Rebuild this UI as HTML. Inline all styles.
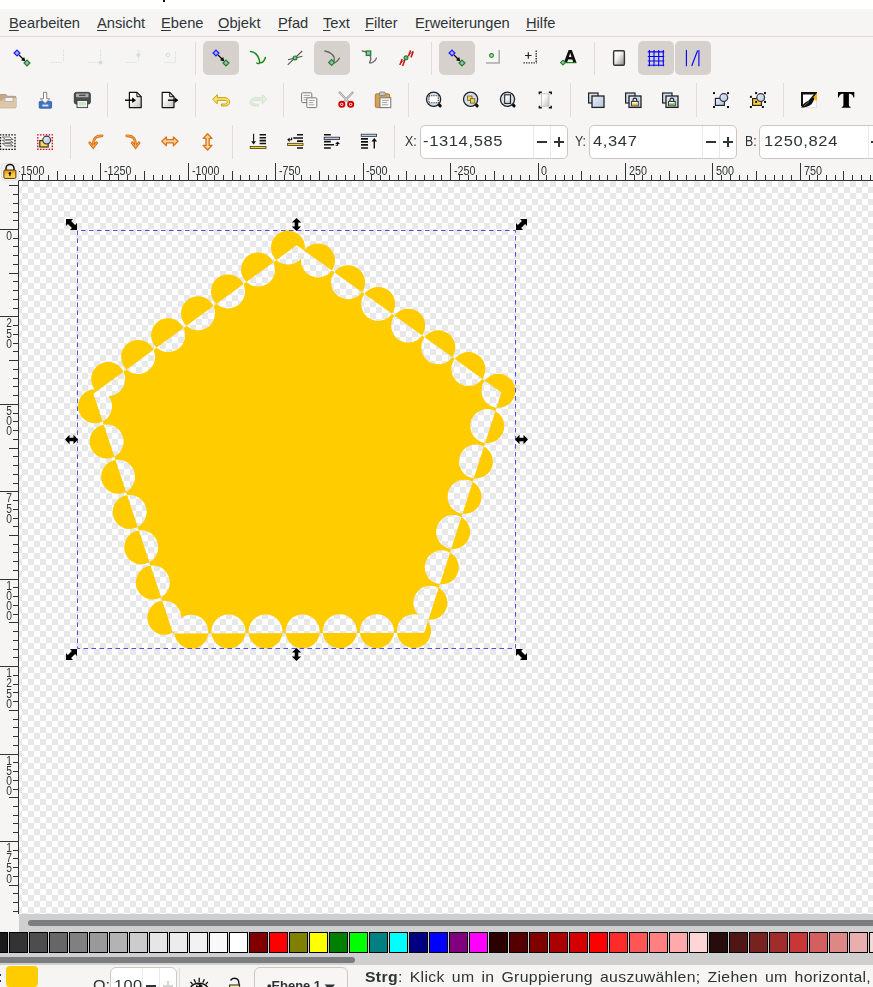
<!DOCTYPE html><html><head><meta charset="utf-8"><title>Inkscape</title><style>
*{box-sizing:border-box;margin:0;padding:0}
html,body{width:873px;height:987px;overflow:hidden;background:#f6f5f4;font-family:"Liberation Sans",sans-serif;color:#2e3436}
.abs{position:absolute}
#top{position:absolute;left:0;top:0;width:873px;height:9px;background:#fff}
#menuline{position:absolute;left:0;top:36px;width:873px;height:1px;background:#dedbd8}
.mi{position:absolute;top:15.4px;font-size:14.7px;line-height:17px;white-space:nowrap;color:#2e3436}
.mi u{text-decoration:underline;text-underline-offset:1.6px;text-decoration-thickness:1px}
.sep{position:absolute;width:1px;background:#dfdcd9}
.pressed{position:absolute;width:36px;height:34px;border-radius:5px;background:#d6d1cd}
.inp{position:absolute;height:34px;background:#fff;border:1px solid #cdc7c2;border-radius:5px}
.div{position:absolute;width:1px;background:#ebe9e7}
.lbl{position:absolute;font-size:14.7px;line-height:17px;color:#2e3436;white-space:nowrap;transform-origin:0 50%;transform:scaleX(.84)}
.num{position:absolute;font-size:14.5px;line-height:17px;color:#2e3436;white-space:nowrap;transform-origin:0 50%;transform:scaleX(1.14);letter-spacing:.55px}
#canvas{position:absolute;left:19px;top:181px;width:854px;height:733px;background-color:#fff;
 background-image:conic-gradient(#e8e8e8 25%,#fff 0 50%,#e8e8e8 0 75%,#fff 0);background-size:12px 12px;background-position:-3px 0px}
#hscroll{position:absolute;left:19px;top:914px;width:854px;height:18px;background:#cfcfcf}
#hthumb{position:absolute;left:28px;top:920px;width:860px;height:6px;border-radius:3px;background:#7b7e7e}
#palette{position:absolute;left:0;top:932px;width:873px;height:33px;background:#cfcfcf}
.sw{position:absolute;top:932px;width:19px;height:21px;border:1px solid #000}
#pthumb{position:absolute;left:-10px;top:957px;width:365px;height:6px;border-radius:3px;background:#7b7e7e}
#status{position:absolute;left:0;top:965px;width:873px;height:22px;background:#f6f5f4}
.rl{position:absolute;font-size:12.5px;line-height:12px;color:#2e3436;transform-origin:0 0;transform:scaleX(.86);white-space:nowrap}
.vl{position:absolute;font-size:12.5px;line-height:10.2px;color:#2e3436;width:10px;text-align:center;transform-origin:50% 0;transform:scaleX(.82)}
.st{position:absolute;font-size:14.6px;line-height:17px;color:#2e3436;white-space:nowrap;transform-origin:0 50%}
</style></head><body>
<div id="top"></div><div class="abs" style="left:162.5px;top:0;width:2.5px;height:2px;background:#111"></div>
<div id="menuline"></div>
<div class="mi" style="left:9px"><u>B</u>earbeiten</div>
<div class="mi" style="left:97px"><u>A</u>nsicht</div>
<div class="mi" style="left:161px"><u>E</u>bene</div>
<div class="mi" style="left:218px"><u>O</u>bjekt</div>
<div class="mi" style="left:278px"><u>P</u>fad</div>
<div class="mi" style="left:323px"><u>T</u>ext</div>
<div class="mi" style="left:365px"><u>F</u>ilter</div>
<div class="mi" style="left:415px">E<u>r</u>weiterungen</div>
<div class="mi" style="left:526px"><u>H</u>ilfe</div>
<div class="pressed" style="left:203px;top:41px"></div>
<div class="pressed" style="left:314px;top:41px"></div>
<div class="pressed" style="left:439px;top:41px"></div>
<div class="pressed" style="left:638px;top:41px"></div>
<div class="pressed" style="left:675px;top:41px"></div>
<div class="sep" style="left:195px;top:42px;height:33px"></div>
<div class="sep" style="left:431px;top:42px;height:33px"></div>
<div class="sep" style="left:594px;top:42px;height:33px"></div>
<div class="sep" style="left:107px;top:83px;height:34px"></div>
<div class="sep" style="left:195px;top:83px;height:34px"></div>
<div class="sep" style="left:283px;top:83px;height:34px"></div>
<div class="sep" style="left:408px;top:83px;height:34px"></div>
<div class="sep" style="left:570px;top:83px;height:34px"></div>
<div class="sep" style="left:696px;top:83px;height:34px"></div>
<div class="sep" style="left:783px;top:83px;height:34px"></div>
<div class="sep" style="left:70px;top:125px;height:34px"></div>
<div class="sep" style="left:232px;top:125px;height:34px"></div>
<div class="sep" style="left:394px;top:125px;height:34px"></div>
<div class="lbl" style="left:405px;top:133px">X:</div>
<div class="inp" style="left:420px;top:125px;width:148px"></div>
<div class="div" style="left:533px;top:126px;height:32px"></div><div class="div" style="left:550px;top:126px;height:32px"></div>
<div class="num" style="left:423px;top:133px">-1314,585</div>
<div class="abs" style="left:536.5px;top:141px;width:10px;height:2px;background:#2e3436"></div>
<div class="abs" style="left:553.5px;top:141px;width:10px;height:2px;background:#2e3436"></div><div class="abs" style="left:557.5px;top:137px;width:2px;height:10px;background:#2e3436"></div>
<div class="lbl" style="left:575px;top:133px">Y:</div>
<div class="inp" style="left:589px;top:125px;width:148px"></div>
<div class="div" style="left:702px;top:126px;height:32px"></div><div class="div" style="left:719px;top:126px;height:32px"></div>
<div class="num" style="left:592.6px;top:133px">4,347</div>
<div class="abs" style="left:705.5px;top:141px;width:10px;height:2px;background:#2e3436"></div>
<div class="abs" style="left:722.5px;top:141px;width:10px;height:2px;background:#2e3436"></div><div class="abs" style="left:726.5px;top:137px;width:2px;height:10px;background:#2e3436"></div>
<div class="lbl" style="left:745px;top:133px">B:</div>
<div class="inp" style="left:759px;top:125px;width:148px"></div>
<div class="div" style="left:867.5px;top:126px;height:32px"></div><div class="div" style="left:884.5px;top:126px;height:32px"></div>
<div class="num" style="left:764px;top:133px">1250,824</div>
<div class="abs" style="left:871.0px;top:141px;width:10px;height:2px;background:#2e3436"></div>
<div class="abs" style="left:888.0px;top:141px;width:10px;height:2px;background:#2e3436"></div><div class="abs" style="left:892.0px;top:137px;width:2px;height:10px;background:#2e3436"></div>
<div id="canvas"></div>
<svg class="abs" style="left:0;top:0" width="873" height="987" viewBox="0 0 873 987">
<defs><g id="cs"><circle cx="498.45" cy="390.84" r="17.0"/><circle cx="468.38" cy="369.10" r="17.0"/><circle cx="438.31" cy="347.36" r="17.0"/><circle cx="408.23" cy="325.63" r="17.0"/><circle cx="378.16" cy="303.89" r="17.0"/><circle cx="348.09" cy="282.15" r="17.0"/><circle cx="318.02" cy="260.41" r="17.0"/><circle cx="287.97" cy="247.62" r="17.0"/><circle cx="258.00" cy="269.50" r="17.0"/><circle cx="228.03" cy="291.38" r="17.0"/><circle cx="198.07" cy="313.27" r="17.0"/><circle cx="168.10" cy="335.15" r="17.0"/><circle cx="138.13" cy="357.03" r="17.0"/><circle cx="108.16" cy="378.92" r="17.0"/><circle cx="95.02" cy="406.22" r="17.0"/><circle cx="106.57" cy="441.48" r="17.0"/><circle cx="118.12" cy="476.74" r="17.0"/><circle cx="129.67" cy="512.01" r="17.0"/><circle cx="141.22" cy="547.27" r="17.0"/><circle cx="152.77" cy="582.53" r="17.0"/><circle cx="164.32" cy="617.80" r="17.0"/><circle cx="191.34" cy="631.67" r="17.0"/><circle cx="228.45" cy="631.58" r="17.0"/><circle cx="265.55" cy="631.49" r="17.0"/><circle cx="302.66" cy="631.40" r="17.0"/><circle cx="339.76" cy="631.31" r="17.0"/><circle cx="376.87" cy="631.22" r="17.0"/><circle cx="413.98" cy="631.13" r="17.0"/><circle cx="430.37" cy="602.68" r="17.0"/><circle cx="441.75" cy="567.36" r="17.0"/><circle cx="453.14" cy="532.04" r="17.0"/><circle cx="464.52" cy="496.73" r="17.0"/><circle cx="475.90" cy="461.41" r="17.0"/><circle cx="487.28" cy="426.09" r="17.0"/></g><path id="pg" d="M296.70,245.21 L501.35,392.43 L424.24,632.78 L173.07,633.59 L93.45,393.64Z"/>
<mask id="m1" maskUnits="userSpaceOnUse" x="60" y="210" width="480" height="460"><use href="#pg" fill="#fff"/><use href="#cs" fill="#000"/></mask>
<mask id="m2" maskUnits="userSpaceOnUse" x="60" y="210" width="480" height="460"><use href="#cs" fill="#fff"/><use href="#pg" fill="#000"/></mask></defs>
<rect x="60" y="210" width="480" height="460" fill="#ffcc00" mask="url(#m1)"/>
<rect x="60" y="210" width="480" height="460" fill="#ffcc00" mask="url(#m2)"/>
<rect x="77.5" y="230.5" width="438" height="418" fill="none" stroke="#5050e8" stroke-width="1" stroke-dasharray="4.5 3.5" stroke-dashoffset="4.5"/>
<path d="M0,0 L7,0 L5.1,1.9 L9.1,5.9 L11,4 L11,11 L4,11 L5.9,9.1 L1.9,5.1 L0,7 Z" transform="translate(66,219)" fill="#000"/><path d="M0,0 L7,0 L5.1,1.9 L9.1,5.9 L11,4 L11,11 L4,11 L5.9,9.1 L1.9,5.1 L0,7 Z" transform="translate(527,219) scale(-1,1)" fill="#000"/><path d="M0,0 L7,0 L5.1,1.9 L9.1,5.9 L11,4 L11,11 L4,11 L5.9,9.1 L1.9,5.1 L0,7 Z" transform="translate(77,649) scale(-1,1)" fill="#000"/><path d="M0,0 L7,0 L5.1,1.9 L9.1,5.9 L11,4 L11,11 L4,11 L5.9,9.1 L1.9,5.1 L0,7 Z" transform="translate(516,649)" fill="#000"/><path d="M0,-6.5 L4.7,-2 L1.8,-2 L1.8,2 L4.7,2 L0,6.5 L-4.7,2 L-1.8,2 L-1.8,-2 L-4.7,-2 Z" transform="translate(296.5,224.5)" fill="#000"/><path d="M0,-6.5 L4.7,-2 L1.8,-2 L1.8,2 L4.7,2 L0,6.5 L-4.7,2 L-1.8,2 L-1.8,-2 L-4.7,-2 Z" transform="translate(296.5,654.5)" fill="#000"/><path d="M-6.5,0 L-2,-4.7 L-2,-1.8 L2,-1.8 L2,-4.7 L6.5,0 L2,4.7 L2,1.8 L-2,1.8 L-2,4.7 Z" transform="translate(71.5,439.5)" fill="#000"/><path d="M-6.5,0 L-2,-4.7 L-2,-1.8 L2,-1.8 L2,-4.7 L6.5,0 L2,4.7 L2,1.8 L-2,1.8 L-2,4.7 Z" transform="translate(521.5,439.5)" fill="#000"/>
<rect x="0" y="162" width="873" height="19" fill="#f6f5f4"/><rect x="0" y="181" width="19" height="733" fill="#f6f5f4"/><path d="M22.5,175V180 M30.5,175V180 M39.5,175V180 M48.5,175V180 M57.5,171V180 M65.5,175V180 M74.5,175V180 M83.5,175V180 M92.5,175V180 M100.5,163V180 M109.5,175V180 M118.5,175V180 M127.5,175V180 M135.5,175V180 M144.5,171V180 M153.5,175V180 M162.5,175V180 M170.5,175V180 M179.5,175V180 M188.5,163V180 M197.5,175V180 M205.5,175V180 M214.5,175V180 M223.5,175V180 M232.5,171V180 M240.5,175V180 M249.5,175V180 M258.5,175V180 M266.5,175V180 M275.5,163V180 M284.5,175V180 M293.5,175V180 M301.5,175V180 M310.5,175V180 M319.5,171V180 M328.5,175V180 M336.5,175V180 M345.5,175V180 M354.5,175V180 M363.5,163V180 M371.5,175V180 M380.5,175V180 M389.5,175V180 M398.5,175V180 M406.5,171V180 M415.5,175V180 M424.5,175V180 M433.5,175V180 M441.5,175V180 M450.5,163V180 M459.5,175V180 M468.5,175V180 M476.5,175V180 M485.5,175V180 M494.5,171V180 M503.5,175V180 M511.5,175V180 M520.5,175V180 M529.5,175V180 M538.5,163V180 M546.5,175V180 M555.5,175V180 M564.5,175V180 M572.5,175V180 M581.5,171V180 M590.5,175V180 M599.5,175V180 M607.5,175V180 M616.5,175V180 M625.5,163V180 M634.5,175V180 M642.5,175V180 M651.5,175V180 M660.5,175V180 M669.5,171V180 M677.5,175V180 M686.5,175V180 M695.5,175V180 M704.5,175V180 M712.5,163V180 M721.5,175V180 M730.5,175V180 M739.5,175V180 M747.5,175V180 M756.5,171V180 M765.5,175V180 M774.5,175V180 M782.5,175V180 M791.5,175V180 M800.5,163V180 M809.5,175V180 M817.5,175V180 M826.5,175V180 M835.5,175V180 M843.5,171V180 M852.5,175V180 M861.5,175V180 M870.5,175V180 M878.5,175V180 M9,185.5H18 M13,194.5H18 M13,203.5H18 M13,212.5H18 M13,220.5H18 M0,229.5H18 M13,238.5H18 M13,246.5H18 M13,255.5H18 M13,264.5H18 M9,273.5H18 M13,281.5H18 M13,290.5H18 M13,299.5H18 M13,308.5H18 M0,316.5H18 M13,325.5H18 M13,334.5H18 M13,343.5H18 M13,351.5H18 M9,360.5H18 M13,369.5H18 M13,378.5H18 M13,386.5H18 M13,395.5H18 M0,404.5H18 M13,413.5H18 M13,421.5H18 M13,430.5H18 M13,439.5H18 M9,448.5H18 M13,456.5H18 M13,465.5H18 M13,474.5H18 M13,483.5H18 M0,491.5H18 M13,500.5H18 M13,509.5H18 M13,518.5H18 M13,526.5H18 M9,535.5H18 M13,544.5H18 M13,552.5H18 M13,561.5H18 M13,570.5H18 M0,579.5H18 M13,587.5H18 M13,596.5H18 M13,605.5H18 M13,614.5H18 M9,622.5H18 M13,631.5H18 M13,640.5H18 M13,649.5H18 M13,657.5H18 M0,666.5H18 M13,675.5H18 M13,684.5H18 M13,692.5H18 M13,701.5H18 M9,710.5H18 M13,719.5H18 M13,727.5H18 M13,736.5H18 M13,745.5H18 M0,754.5H18 M13,762.5H18 M13,771.5H18 M13,780.5H18 M13,789.5H18 M9,797.5H18 M13,806.5H18 M13,815.5H18 M13,823.5H18 M13,832.5H18 M0,841.5H18 M13,850.5H18 M13,858.5H18 M13,867.5H18 M13,876.5H18 M9,885.5H18 M13,893.5H18 M13,902.5H18 M13,911.5H18 M19,180.5H873 M18.5,180V914 " stroke="#2e3436" stroke-width="1" fill="none"/>
</svg>
<div class="rl" style="left:16.6px;top:165px">-1500</div><div class="rl" style="left:104.1px;top:165px">-1250</div><div class="rl" style="left:191.5px;top:165px">-1000</div><div class="rl" style="left:278.9px;top:165px">-750</div><div class="rl" style="left:366.3px;top:165px">-500</div><div class="rl" style="left:453.8px;top:165px">-250</div><div class="rl" style="left:541.2px;top:165px">0</div><div class="rl" style="left:628.6px;top:165px">250</div><div class="rl" style="left:716.1px;top:165px">500</div><div class="rl" style="left:803.5px;top:165px">750</div><div class="vl" style="left:3.6px;top:231.0px">0</div><div class="vl" style="left:3.6px;top:318.4px">2<br>5<br>0</div><div class="vl" style="left:3.6px;top:405.9px">5<br>0<br>0</div><div class="vl" style="left:3.6px;top:493.3px">7<br>5<br>0</div><div class="vl" style="left:3.6px;top:580.7px">1<br>0<br>0<br>0</div><div class="vl" style="left:3.6px;top:668.1px">1<br>2<br>5<br>0</div><div class="vl" style="left:3.6px;top:755.6px">1<br>5<br>0<br>0</div><div class="vl" style="left:3.6px;top:843.0px">1<br>7<br>5<br>0</div><svg class="abs" style="left:0;top:160px" width="20" height="21" viewBox="0 0 20 21"><defs><linearGradient id="lk" x1="0" y1="0" x2="0" y2="1"><stop offset="0" stop-color="#e08a18"/><stop offset=".45" stop-color="#f8c030"/><stop offset="1" stop-color="#ffe268"/></linearGradient></defs><rect x="0" y="0" width="19" height="20.5" fill="#f6f5f4"/><rect x="1.5" y="3.5" width="17" height="17" rx="3.5" fill="#f4f2f0" stroke="#e6e3e0" stroke-width="1"/><path d="M6,10.5V8.4a4,4 0 0 1 8,0V10.5" fill="none" stroke="#111" stroke-width="1.5"/><rect x="3.9" y="10" width="12" height="8.4" rx="1.2" fill="url(#lk)" stroke="#4a3a10" stroke-width="1"/><circle cx="9.9" cy="13.2" r="1.2" fill="#111"/><rect x="9.3" y="13.4" width="1.2" height="2.8" fill="#111"/></svg>
<svg class="abs" style="left:0;top:0" width="873" height="162" viewBox="0 0 873 162" fill="none"><defs><linearGradient id="gp" x1="0" y1="0" x2="1" y2="1"><stop offset="0" stop-color="#fff"/><stop offset=".35" stop-color="#fafafa"/><stop offset="1" stop-color="#c0c0c0"/></linearGradient><linearGradient id="gb" x1="0" y1="0" x2="1" y2="1"><stop offset="0" stop-color="#eaf0f8"/><stop offset="1" stop-color="#b4c6dc"/></linearGradient><linearGradient id="gg" x1="0" y1="0" x2="1" y2="1"><stop offset="0" stop-color="#fff"/><stop offset=".4" stop-color="#f4f4f4"/><stop offset="1" stop-color="#8a8a8a"/></linearGradient></defs><path d="M19,55L23.8,59.8" stroke="#111" stroke-width="1.3"/><path d="M25.4,61.4l-4.4,-1.2l3.2,-3.2z" fill="#111"/><path d="M17,50.1l2.9,2.9l-2.9,2.9l-2.9,-2.9z" fill="#b0b0ff" stroke="#2222ee" stroke-width="1.3"/><path d="M27,60.1l2.9,2.9l-2.9,2.9l-2.9,-2.9z" fill="#a8b0d8" stroke="#1e8a1e" stroke-width="1.3"/><path d="M51,62.5H63 M63.5,50V62" stroke="#cfe0cf" stroke-width="1.2" stroke-dasharray="1.2 1.2"/><path d="M88,62.5H100 M100.5,50V62" stroke="#cfe0cf" stroke-width="1.2" stroke-dasharray="1.2 1.2"/><circle cx="100.5" cy="62.5" r="2" fill="#d4e2d4"/><path d="M126,62.5H138 M138.5,50V62" stroke="#cfe0cf" stroke-width="1.2" stroke-dasharray="1.2 1.2"/><circle cx="138.5" cy="55" r="2" fill="#d4e2d4"/><path d="M164,62.5H175 M175.5,52V62" stroke="#cfe0cf" stroke-width="1.2" stroke-dasharray="1.2 1.2"/><circle cx="168" cy="55" r="1.8" stroke="#cfe0cf" stroke-width="1"/><path d="M218,55L222.8,59.8" stroke="#111" stroke-width="1.3"/><path d="M224.4,61.4l-4.4,-1.2l3.2,-3.2z" fill="#111"/><path d="M216,50.1l2.9,2.9l-2.9,2.9l-2.9,-2.9z" fill="#b0b0ff" stroke="#2222ee" stroke-width="1.3"/><path d="M226,60.1l2.9,2.9l-2.9,2.9l-2.9,-2.9z" fill="#a8b0d8" stroke="#1e8a1e" stroke-width="1.3"/><path d="M250.6,51.6C256.4,52.2 259,56.4 259.8,62.8C262.6,63 264.6,60.6 265.3,57.4M259.8,62.8C258.8,63.6 257.6,63.6 256.8,63" stroke="#1b8a1b" stroke-width="1.5" stroke-linecap="round" stroke-linejoin="round"/><path d="M287.7,64.8L302.2,51 M288,59.8L302.4,56.2" stroke="#555" stroke-width="1.1"/><circle cx="295" cy="57.9" r="1.9" fill="#8fa0c8" stroke="#1e8a1e" stroke-width="1.2"/><path d="M324.8,51C331,52 335.5,56 334,60.5C333,63.5 335.5,64 339.4,58.2" stroke="#666" stroke-width="1.3" stroke-linecap="round"/><path d="M331.6,59.6l2.9,2.9l-2.9,2.9l-2.9,-2.9z" fill="#a8b0d8" stroke="#1e8a1e" stroke-width="1.3"/><path d="M362.3,51C366,51.5 369,53 370.5,56.5C372,60 368.5,62.8 370,63C372.5,63 375,61 376.4,58.2" stroke="#666" stroke-width="1.3" stroke-linecap="round"/><rect x="366.3" y="51" width="4.4" height="4.4" fill="#a8b0d8" stroke="#1e8a1e" stroke-width="1.3"/><path d="M399.3,64.6L413,51.2" stroke="#777" stroke-width="1"/><path d="M400,64.8L402.2,59 M402.6,66L404.8,60 M408.4,56.2L410.6,50.4 M411,57.4L413.2,51.4" stroke="#d01818" stroke-width="1.6"/><circle cx="406" cy="57.7" r="1.9" fill="#8fa0c8" stroke="#1e8a1e" stroke-width="1.2"/><path d="M454,55L458.8,59.8" stroke="#111" stroke-width="1.3"/><path d="M460.4,61.4l-4.4,-1.2l3.2,-3.2z" fill="#111"/><path d="M452,50.1l2.9,2.9l-2.9,2.9l-2.9,-2.9z" fill="#b0b0ff" stroke="#2222ee" stroke-width="1.3"/><path d="M462,60.1l2.9,2.9l-2.9,2.9l-2.9,-2.9z" fill="#a8b0d8" stroke="#1e8a1e" stroke-width="1.3"/><path d="M486,62.9H499.2V50" stroke="#aaa" stroke-width="1.5"/><circle cx="491.5" cy="55.5" r="1.9" fill="#c8e0c8" stroke="#1e8a1e" stroke-width="1.2"/><path d="M523.5,62.9H536.8 M536.2,50.5V62" stroke="#333" stroke-width="1.4" stroke-dasharray="1.4 1.1"/><path d="M525,55.5H531.5 M528.3,52.2V58.8" stroke="#222" stroke-width="1.2"/><path d="M560.5,62.6H576.5" stroke="#1e8a1e" stroke-width="1.3"/><path d="M564,62.2L568.6,49.9H571.8L576.4,62.2H573.2L572.3,59.5H568.1L567.2,62.2ZM568.9,57.1H571.5L570.2,53.1Z" fill="#111" fill-rule="evenodd"/><path d="M563,60.2l2.4,2.4l-2.4,2.4l-2.4,-2.4z" fill="#a8b0d8" stroke="#1e8a1e" stroke-width="1.1"/><rect x="613.6" y="50.8" width="10.8" height="14.4" rx="1.2" fill="url(#gg)" stroke="#333" stroke-width="1.4"/><path d="M649.4,50.1V66.2M654,50.1V66.2M658.7,50.1V66.2M663.3,50.1V66.2M647.8,51.9H664.2M647.8,56.5H664.2M647.8,61H664.2M647.8,65.2H664.2" stroke="#0000ff" stroke-width="1.1"/><path d="M686.4,50.1V66.2M698.9,50.1V66.2M691.7,66L697.6,50.5" stroke="#0000ff" stroke-width="1.1"/><path d="M-1,94.5H6l1.5,1.8H15a1,1 0 0 1 1,1V106.8a1,1 0 0 1 -1,1H-1z" fill="#c4aa86" stroke="#a89070" stroke-width=".8"/><path d="M-1,107.8V101l4,-0.5l1,-2.5H16V106.8a1,1 0 0 1 -1,1z" fill="#dcc8a8"/><rect x="5" y="97.5" width="8" height="4" fill="#f4f4f4" stroke="#999" stroke-width=".6"/><rect x="39.2" y="101.4" width="12.4" height="6.8" rx=".8" fill="#3b74c7" stroke="#2a5aa0" stroke-width=".8"/><rect x="42.4" y="104.6" width="6" height="1.8" fill="#dfe8f6"/><path d="M43.5,92.3h3.2v6.5h3.1l-4.7,4.6l-4.7,-4.6h3.1z" fill="#fcfcfc" stroke="#777" stroke-width=".9" stroke-linejoin="round"/><rect x="74.3" y="92.4" width="16" height="11.6" rx="2" fill="#4a4e50" stroke="#2e3234" stroke-width=".9"/><rect x="76" y="93.6" width="12.6" height="3.6" rx=".8" fill="#a8acae"/><rect x="79" y="94.6" width="6.5" height="1.4" fill="#4a4e50"/><rect x="77" y="100.4" width="10.6" height="7.2" fill="#eef4ea" stroke="#3a3e40" stroke-width=".9"/><rect x="78.6" y="102" width="7.4" height="3.6" fill="#cfe4c8"/><path d="M129.4,92.4h7.5l4.3,4.3V107.6h-11.8z" fill="url(#gp)" stroke="#111" stroke-width="1.2" stroke-linejoin="round"/><path d="M136.9,92.4v4.3h4.3" stroke="#111" stroke-width="1"/><path d="M125,100.2H133" stroke="#000" stroke-width="1.4"/><path d="M136,100.2l-3.8,-2.9v5.8z" fill="#000"/><path d="M162.2,92.4h7.5l4.3,4.3V107.6h-11.8z" fill="url(#gp)" stroke="#111" stroke-width="1.2" stroke-linejoin="round"/><path d="M169.7,92.4v4.3h4.3" stroke="#111" stroke-width="1"/><path d="M168,100.2H175" stroke="#000" stroke-width="1.4"/><path d="M178.4,100.2l-3.8,-2.9v5.8z" fill="#000"/><path transform="translate(212.7,0)" d="M0,99.3L4.6,94.6V97.6H11C15.2,97.6 17,99.8 17,102C17,104.6 14.8,106 12,106H8.6V104H11.8C13.6,104 14.6,103.2 14.6,102C14.6,100.8 13.6,100.4 11.4,100.4H4.6V103.8Z" fill="#f8e070" stroke="#c09c00" stroke-width=".9" stroke-linejoin="round"/><path transform="translate(267,0) scale(-1,1)" d="M0,99.3L4.6,94.6V97.6H11C15.2,97.6 17,99.8 17,102C17,104.6 14.8,106 12,106H8.6V104H11.8C13.6,104 14.6,103.2 14.6,102C14.6,100.8 13.6,100.4 11.4,100.4H4.6V103.8Z" fill="#e2eede" stroke="#cfe2c8" stroke-width=".9" stroke-linejoin="round"/><rect x="301.6" y="92.8" width="10.2" height="9.8" rx="1" fill="#fbfbfb" stroke="#777" stroke-width="1"/><path d="M303.6,95.39999999999999h6.199999999999999M303.6,97.6h4.699999999999999M303.6,99.8h5.699999999999999" stroke="#999" stroke-width=".9"/><rect x="306.8" y="97.8" width="10" height="9.8" rx="1" fill="#fbfbfb" stroke="#777" stroke-width="1"/><path d="M308.8,100.39999999999999h6M308.8,102.6h4.5M308.8,104.8h5.5" stroke="#999" stroke-width=".9"/><path d="M339.6,92.6L349.6,103 M352.6,92.6L342.8,103" stroke="#9a9ea0" stroke-width="2.2" stroke-linecap="round"/><path d="M339.6,92.6L349.6,103 M352.6,92.6L342.8,103" stroke="#e8eaea" stroke-width=".8"/><circle cx="341.8" cy="104.3" r="2.6" stroke="#d40000" stroke-width="1.9" fill="#fff"/><circle cx="350.7" cy="104.3" r="2.6" stroke="#d40000" stroke-width="1.9" fill="#fff"/><circle cx="341.8" cy="104.3" r=".9" fill="#d40000"/><circle cx="350.7" cy="104.3" r=".9" fill="#d40000"/><rect x="375.3" y="93.8" width="14.4" height="13.8" rx="1.4" fill="#d4a055" stroke="#a87428" stroke-width=".9"/><rect x="379.6" y="92" width="5.6" height="3.6" rx="1" fill="#c8c8c8" stroke="#777" stroke-width=".8"/><rect x="380" y="97.8" width="10.8" height="9.8" fill="#fbfbfb" stroke="#777" stroke-width="1"/><path d="M382,100.4h6.8M382,102.6h5.4M382,104.8h6.2" stroke="#999" stroke-width=".9"/><path d="M438.20000000000005,103.89999999999999l2,2" stroke="#111" stroke-width="3" stroke-linecap="round"/><circle cx="433.6" cy="99.3" r="7.1" fill="#d4e0ee" stroke="#222" stroke-width="1.3"/><rect x="429" y="95.8" width="9.2" height="7" fill="#fff" stroke="#222" stroke-width="1.1" stroke-dasharray="1.1 1.1"/><path d="M475.20000000000005,103.89999999999999l2,2" stroke="#111" stroke-width="3" stroke-linecap="round"/><circle cx="470.6" cy="99.3" r="7.1" fill="#d4e0ee" stroke="#222" stroke-width="1.3"/><rect x="467.6" y="96" width="4.4" height="4.4" fill="#f4d454" stroke="#6a5a20" stroke-width=".8"/><rect x="470.4" y="98.7" width="4.4" height="4.4" fill="#f4d454" stroke="#6a5a20" stroke-width=".8"/><path d="M512.1,103.89999999999999l2,2" stroke="#111" stroke-width="3" stroke-linecap="round"/><circle cx="507.5" cy="99.3" r="7.1" fill="#d4e0ee" stroke="#222" stroke-width="1.3"/><rect x="504.7" y="94.8" width="5.8" height="8.6" fill="url(#gp)" stroke="#222" stroke-width="1.1"/><rect x="541.4" y="93.8" width="7.6" height="12.4" fill="url(#gp)" stroke="#bbb" stroke-width=".8"/><path d="M539.4,94.2V92.2H541.8 M548.8,92.2H551.2V94.2 M539.4,105.8V107.8H541.8 M548.8,107.8H551.2V105.8" stroke="#111" stroke-width="1.5"/><rect x="588.6" y="93" width="9.4" height="10" fill="#cfdcec" stroke="#222" stroke-width="1.2"/><rect x="592.0" y="96" width="12" height="11.4" fill="url(#gb)" stroke="#222" stroke-width="1.3"/><rect x="625.6" y="93" width="9.4" height="10" fill="#cfdcec" stroke="#222" stroke-width="1.2"/><rect x="629.0" y="96" width="12" height="11.4" fill="url(#gb)" stroke="#222" stroke-width="1.3"/><path d="M633.0,101.4V100.0a1.9,1.9 0 0 1 3.8,0V101.4" stroke="#222" stroke-width="1.1"/><rect x="631.6" y="101.4" width="6.6" height="4.4" fill="#fff" stroke="#222" stroke-width=".9"/><rect x="632.1" y="103.4" width="5.6" height="2" fill="#f0c020"/><rect x="662.6" y="93" width="9.4" height="10" fill="#cfdcec" stroke="#222" stroke-width="1.2"/><rect x="666.0" y="96" width="12" height="11.4" fill="url(#gb)" stroke="#222" stroke-width="1.3"/><path d="M670.0,101.4V100.0a1.9,1.9 0 0 1 3.8,0V101.4" stroke="#222" stroke-width="1.1"/><rect x="668.6" y="101.4" width="6.6" height="4.4" fill="#fff" stroke="#222" stroke-width=".9"/><rect x="669.1" y="103.4" width="5.6" height="2" fill="#78b848"/><rect x="715.4" y="98.4" width="9" height="7" fill="url(#gb)" stroke="#223" stroke-width="1.2"/><circle cx="723.8" cy="97.6" r="3.9" fill="url(#gb)" stroke="#334" stroke-width="1.2"/><rect x="713" y="92.1" width="2" height="2" fill="#111"/><rect x="713" y="106" width="2" height="2" fill="#111"/><rect x="727" y="92.1" width="2" height="2" fill="#111"/><rect x="727" y="106" width="2" height="2" fill="#111"/><rect x="752.6" y="98.6" width="8.8" height="6.8" fill="#fbd43c" stroke="#332200" stroke-width="1.2"/><circle cx="760.7" cy="97.6" r="3.9" fill="url(#gb)" stroke="#334" stroke-width="1.2"/><rect x="755.1" y="92.1" width="2" height="2" fill="#111"/><rect x="764" y="92.1" width="2" height="2" fill="#111"/><rect x="749.9" y="95.8" width="2" height="2" fill="#111"/><rect x="764" y="100.9" width="2" height="2" fill="#111"/><rect x="749.9" y="106" width="2" height="2" fill="#111"/><rect x="761.9" y="106" width="2" height="2" fill="#111"/><rect x="755.1" y="100.9" width="2" height="2" fill="#111"/><rect x="801.6" y="92.6" width="15" height="15" fill="#fff"/><path d="M801,92H817V94.4H803V106H801Z" fill="#111"/><path d="M816.6,94.4V107.6H803" stroke="#d8d8d8" stroke-width=".8"/><path d="M801.2,107.8C802,104.4 805.4,102.4 808.4,100.8L815.2,92.8L817,94.2L812.6,102.6C811,106 806.4,107.6 801.2,107.8Z" fill="#111"/><path d="M813.4,97.2L817,92.8V100.6L815.2,100.4Z" fill="#ffb400"/><path d="M804,106L809,101.6" stroke="#888" stroke-width=".7"/><path d="M838,92H854.3V97.4H853.5C853,95.2 852,93.6 848.9,93.4V105C848.9,106.3 849.4,106.7 850.6,106.9V107.8H841.7V106.9C842.9,106.7 843.4,106.3 843.4,105V93.4C840.3,93.6 839.3,95.2 838.8,97.4H838Z" fill="#000"/><rect x="0.5" y="134.8" width="14.5" height="14.5" stroke="#111" stroke-width="1.3" stroke-dasharray="1.6 1.3" stroke-dashoffset=".8"/><path d="M2.4,143.4h7.4l3.4,2.6h-7.4zM2.4,140.2h7.4l3.4,2.6h-7.4zM2.4,137h7.4l3.4,2.6h-7.4z" fill="url(#gp)" stroke="#555" stroke-width=".8" stroke-linejoin="round"/><rect x="37.8" y="134.8" width="14.5" height="14.5" stroke="#e00000" stroke-width="1.3" stroke-dasharray="1.6 1.3" stroke-dashoffset=".8"/><rect x="39.8" y="140.6" width="8.4" height="6.4" fill="#fad850" stroke="#333" stroke-width="1.2"/><circle cx="46.7" cy="140.1" r="3.9" fill="url(#gb)" stroke="#334" stroke-width="1.2"/><path transform="translate(89,0)" d="M13.1,135.8C7,135.6 4.2,138 4.2,146 M0.7,142.7L4.2,147.3L7.8,142.7" stroke="#d8700c" stroke-width="2.7" stroke-linecap="round" stroke-linejoin="miter"/><path transform="translate(89,0)" d="M13.1,135.8C7,135.6 4.2,138 4.2,146 M0.7,142.7L4.2,147.3L7.8,142.7" stroke="#fbbd78" stroke-width=".8" stroke-linecap="round"/><path transform="translate(139.8,0) scale(-1,1)" d="M13.1,135.8C7,135.6 4.2,138 4.2,146 M0.7,142.7L4.2,147.3L7.8,142.7" stroke="#d8700c" stroke-width="2.7" stroke-linecap="round" stroke-linejoin="miter"/><path transform="translate(139.8,0) scale(-1,1)" d="M13.1,135.8C7,135.6 4.2,138 4.2,146 M0.7,142.7L4.2,147.3L7.8,142.7" stroke="#fbbd78" stroke-width=".8" stroke-linecap="round"/><path d="M161.8,141.3l4.6,-4.4v2.8h7v-2.8l4.6,4.4l-4.6,4.4v-2.8h-7v2.8z" fill="#fbd0a0" stroke="#d87414" stroke-width="1.3" stroke-linejoin="round"/><path d="M207.6,133.8l4.4,4.6h-2.8v7h2.8l-4.4,4.6l-4.4,-4.6h2.8v-7h-2.8z" fill="#fbd0a0" stroke="#d87414" stroke-width="1.3" stroke-linejoin="round"/><path d="M253.6,133.8V142" stroke="#111" stroke-width="1.1"/><path d="M251.2,141.2h4.8l-2.4,3.4z" fill="#111"/><path d="M259.6,134.8h6.4M259.6,137.7h6.4M259.6,140.6h6.4M259.6,143.5h6.4" stroke="#111" stroke-width="1.6"/><rect x="250.2" y="146.4" width="15.8" height="2.2" fill="#f6d050" stroke="#4a3a00" stroke-width=".8"/><path d="M297,134.8h6M293.2,138h9.8M297,141.1h6M297,148h6" stroke="#111" stroke-width="1.6"/><rect x="287.6" y="143.3" width="15.4" height="2.2" fill="#f6d050" stroke="#4a3a00" stroke-width=".8"/><path d="M291.6,137.6v2.2h-2.6" stroke="#111" stroke-width="1.1"/><path d="M289.6,137.6l-2.4,2.2l2.4,2.2z" fill="#111"/><path d="M324,134.8h6.8M324,141.6h6.8M324,144.7h10M324,148h6.8" stroke="#111" stroke-width="1.6"/><rect x="324.2" y="137.2" width="15.4" height="2.3" fill="#b8cce4" stroke="#223" stroke-width=".8"/><path d="M337.6,141.4l2.4,2.6h-4.8z" fill="#111"/><path d="M337.6,143.6v1.6h-2" stroke="#111" stroke-width="1.1"/><path d="M361,138.9h7M361,141.8h7M361,144.8h7M361,148h7" stroke="#111" stroke-width="1.7"/><rect x="361.2" y="134.2" width="15.4" height="2.2" fill="#b8cce4" stroke="#334" stroke-width=".8"/><path d="M374.3,148.6V141" stroke="#111" stroke-width="1.4"/><path d="M371.4,141.6h5.8l-2.9,-3.6z" fill="#111"/></svg>
<div id="hscroll"></div><div id="hthumb"></div>
<div id="palette"></div>
<div class="sw" style="left:-11px;background:#1a1a1a"></div>
<div class="sw" style="left:9px;background:#333333"></div>
<div class="sw" style="left:29px;background:#4d4d4d"></div>
<div class="sw" style="left:49px;background:#666666"></div>
<div class="sw" style="left:69px;background:#808080"></div>
<div class="sw" style="left:89px;background:#999999"></div>
<div class="sw" style="left:109px;background:#b3b3b3"></div>
<div class="sw" style="left:129px;background:#cccccc"></div>
<div class="sw" style="left:149px;background:#e6e6e6"></div>
<div class="sw" style="left:169px;background:#ececec"></div>
<div class="sw" style="left:189px;background:#f2f2f2"></div>
<div class="sw" style="left:209px;background:#f9f9f9"></div>
<div class="sw" style="left:229px;background:#ffffff"></div>
<div class="sw" style="left:249px;background:#800000"></div>
<div class="sw" style="left:269px;background:#ff0000"></div>
<div class="sw" style="left:289px;background:#808000"></div>
<div class="sw" style="left:309px;background:#ffff00"></div>
<div class="sw" style="left:329px;background:#008000"></div>
<div class="sw" style="left:349px;background:#00ff00"></div>
<div class="sw" style="left:369px;background:#008080"></div>
<div class="sw" style="left:389px;background:#00ffff"></div>
<div class="sw" style="left:409px;background:#000080"></div>
<div class="sw" style="left:429px;background:#0000ff"></div>
<div class="sw" style="left:449px;background:#800080"></div>
<div class="sw" style="left:469px;background:#ff00ff"></div>
<div class="sw" style="left:489px;background:#2b0000"></div>
<div class="sw" style="left:509px;background:#550000"></div>
<div class="sw" style="left:529px;background:#800000"></div>
<div class="sw" style="left:549px;background:#aa0000"></div>
<div class="sw" style="left:569px;background:#d40000"></div>
<div class="sw" style="left:589px;background:#ff0000"></div>
<div class="sw" style="left:609px;background:#ff2a2a"></div>
<div class="sw" style="left:629px;background:#ff5555"></div>
<div class="sw" style="left:649px;background:#ff8080"></div>
<div class="sw" style="left:669px;background:#ffaaaa"></div>
<div class="sw" style="left:689px;background:#ffd5d5"></div>
<div class="sw" style="left:709px;background:#280b0b"></div>
<div class="sw" style="left:729px;background:#501616"></div>
<div class="sw" style="left:749px;background:#782121"></div>
<div class="sw" style="left:769px;background:#a02c2c"></div>
<div class="sw" style="left:789px;background:#c83737"></div>
<div class="sw" style="left:809px;background:#d35f5f"></div>
<div class="sw" style="left:829px;background:#de8787"></div>
<div class="sw" style="left:849px;background:#e9afaf"></div>
<div class="sw" style="left:869px;background:#f4d7d7"></div>
<div id="pthumb"></div>
<div id="status"></div>
<div class="abs" style="left:6px;top:966px;width:32px;height:20.5px;border-radius:4px;background:#ffcc00"></div><div class="abs" style="left:-2px;top:974px;width:3px;height:2px;background:#2a2a88"></div><div class="abs" style="left:-2px;top:980px;width:3px;height:2px;background:#2a2a88"></div><div class="st" style="left:92.6px;top:977px;transform:scaleX(1.1)">O:</div><div class="abs" style="left:110px;top:967px;width:67px;height:30px;background:#fff;border:1px solid #cdc7c2;border-radius:6px"></div><div class="div" style="left:142px;top:968px;height:20px"></div><div class="div" style="left:159px;top:968px;height:20px"></div><div class="st" style="left:114px;top:977px;transform:scaleX(1.12);letter-spacing:.4px">100</div><div class="abs" style="left:146px;top:985px;width:10px;height:2px;background:#2e3436"></div><div class="abs" style="left:167px;top:981px;width:2px;height:6px;background:#d4d2d0"></div><div class="abs" style="left:163px;top:985px;width:10px;height:2px;background:#d4d2d0"></div><div class="sep" style="left:179px;top:968px;height:20px"></div><svg class="abs" style="left:185px;top:972px" width="60" height="15" viewBox="185 972 60 15" fill="none"><path d="M190.6,987.4C194,981.8 204,981.8 207.6,987.4" stroke="#111" stroke-width="1.5"/><circle cx="199.2" cy="987.4" r="3.4" fill="#111"/><circle cx="198" cy="985.4" r=".9" fill="#ddd"/><path d="M199.2,982V977.8M195.6,982.6L194,979.2M202.8,982.6L204.4,979.2M192.6,984.4L190.6,981.8M205.8,984.4L207.8,981.8" stroke="#111" stroke-width="1.3"/><path d="M230.9,980C232.4,977.8 237,977.4 238.4,980.4L239.2,985" stroke="#111" stroke-width="1.4" stroke-linecap="round"/><rect x="229.6" y="985" width="10" height="4" fill="#f4efa0" stroke="#222" stroke-width="1"/></svg><div class="abs" style="left:254px;top:966.5px;width:94px;height:30px;border:1px solid #cdc7c2;border-radius:6px;background:#f7f6f5"></div><div class="st" style="left:266.5px;top:977.3px;font-weight:bold;font-size:13.3px;transform:scaleX(.97)">•Ebene 1</div><svg class="abs" style="left:322px;top:983px" width="16" height="5" viewBox="0 0 16 5"><path d="M2.6,1.6h10.4l-5.2,6z" fill="#2e3436"/></svg><div class="st" id="stxt" style="left:364.5px;top:968.5px;transform:scaleX(1.0824);letter-spacing:.3px;word-spacing:2.2px"><b>Strg</b>: Klick um in Gruppierung auszuwählen; Ziehen um horizontal,</div>
</body></html>
